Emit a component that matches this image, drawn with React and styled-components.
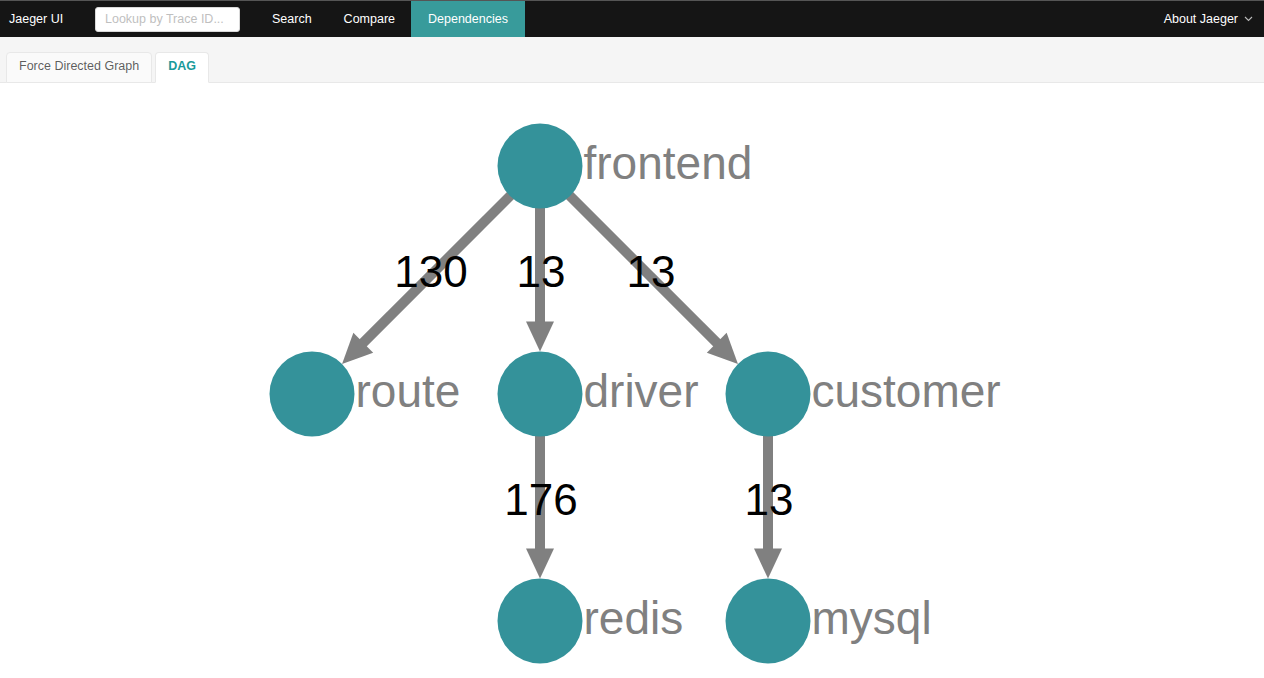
import React from 'react';
import styled, { createGlobalStyle } from 'styled-components';

const GlobalStyle = createGlobalStyle`
  html, body {
    margin: 0;
    padding: 0;
    background: #fff;
    font-family: "Liberation Sans", Arial, sans-serif;
  }
`;

const NODE_R = 42.5;
const ARROW_LEN = 30;
const ARROW_HALF = 14;

const nodes = {
  frontend: { x: 540, y: 83 },
  route: { x: 312, y: 311 },
  driver: { x: 540, y: 311 },
  customer: { x: 768, y: 311 },
  redis: { x: 540, y: 538 },
  mysql: { x: 768, y: 538 },
};

const edges = [
  { from: 'frontend', to: 'route', count: 130, dx: 5 },
  { from: 'frontend', to: 'driver', count: 13, dx: 1 },
  { from: 'frontend', to: 'customer', count: 13, dx: -3 },
  { from: 'driver', to: 'redis', count: 176, dx: 1 },
  { from: 'customer', to: 'mysql', count: 13, dx: 1 },
];

const edgeGeometry = (a, b) => {
  const dx = b.x - a.x;
  const dy = b.y - a.y;
  const len = Math.sqrt(dx * dx + dy * dy);
  const ux = dx / len;
  const uy = dy / len;
  const tip = { x: b.x - ux * NODE_R, y: b.y - uy * NODE_R };
  const base = { x: tip.x - ux * ARROW_LEN, y: tip.y - uy * ARROW_LEN };
  const left = { x: base.x - uy * ARROW_HALF, y: base.y + ux * ARROW_HALF };
  const right = { x: base.x + uy * ARROW_HALF, y: base.y - ux * ARROW_HALF };
  return {
    line: { x1: a.x, y1: a.y, x2: base.x + ux * 2, y2: base.y + uy * 2 },
    head: `${tip.x},${tip.y} ${left.x},${left.y} ${right.x},${right.y}`,
    mid: { x: (a.x + b.x) / 2, y: (a.y + b.y) / 2 },
  };
};

const App = () => (
  <Page>
    <GlobalStyle />
    <TopNav>
      <Brand>Jaeger UI</Brand>
      <TraceLookup placeholder="Lookup by Trace ID..." />
      <NavItem>Search</NavItem>
      <NavItem>Compare</NavItem>
      <NavItem $active>Dependencies</NavItem>
      <AboutMenu>
        About Jaeger
        <svg width="9" height="6" viewBox="0 0 9 6">
          <path d="M1 1 L4.5 4.5 L8 1" fill="none" stroke="#bbb" strokeWidth="1.1" />
        </svg>
      </AboutMenu>
    </TopNav>
    <TabBar>
      <Tab>Force Directed Graph</Tab>
      <Tab $active>DAG</Tab>
    </TabBar>
    <GraphCanvas viewBox="0 0 1264 595">
      {edges.map(e => {
        const g = edgeGeometry(nodes[e.from], nodes[e.to]);
        return (
          <g key={`${e.from}-${e.to}`}>
            <EdgeLine {...g.line} />
            <EdgeHead points={g.head} />
          </g>
        );
      })}
      {Object.entries(nodes).map(([name, n]) => (
        <g key={name}>
          <NodeCircle cx={n.x} cy={n.y} r={NODE_R} />
          <NodeLabel x={n.x + NODE_R + 1} y={n.y + 13}>{name}</NodeLabel>
        </g>
      ))}
      {edges.map(e => {
        const g = edgeGeometry(nodes[e.from], nodes[e.to]);
        return (
          <EdgeLabel key={`l-${e.from}-${e.to}`} x={g.mid.x + e.dx} y={g.mid.y + 7}>
            {e.count}
          </EdgeLabel>
        );
      })}
    </GraphCanvas>
  </Page>
);

const Page = styled.div`
  width: 100%;
  min-height: 100vh;
  display: flex;
  flex-direction: column;
`;

const TopNav = styled.div`
  display: flex;
  align-items: stretch;
  height: 36px;
  background: #151515;
  border-top: 1px solid #555;
  font-size: 12.5px;
  color: #fff;
`;

const Brand = styled.div`
  width: 95px;
  box-sizing: border-box;
  padding-left: 9px;
  display: flex;
  align-items: center;
`;

const TraceLookup = styled.input`
  align-self: center;
  width: 145px;
  height: 25px;
  box-sizing: border-box;
  margin: 0 16px 0 0;
  padding: 0 9px;
  border: 1px solid #d9d9d9;
  border-radius: 3px;
  background: #fff;
  font-family: inherit;
  font-size: 12.5px;
  outline: none;
  &::placeholder {
    color: #bfbfbf;
  }
`;

const NavItem = styled.div`
  display: flex;
  align-items: center;
  padding: 0 16px;
  background: ${p => (p.$active ? '#389b9b' : 'transparent')};
  color: #fff;
  cursor: pointer;
  ${p => p.$active && 'padding: 0 17px;'}
`;

const AboutMenu = styled.div`
  margin-left: auto;
  display: flex;
  align-items: center;
  gap: 6px;
  padding-right: 11px;
  cursor: pointer;
`;

const TabBar = styled.div`
  display: flex;
  align-items: flex-end;
  gap: 3px;
  height: 45px;
  padding-left: 6px;
  background: #f5f5f5;
  border-bottom: 1px solid #e8e8e8;
`;

const Tab = styled.div`
  height: 31px;
  box-sizing: border-box;
  display: flex;
  align-items: center;
  padding: 0 12px 3px;
  margin-bottom: -1px;
  border: 1px solid #e8e8e8;
  border-bottom-color: ${p => (p.$active ? '#fff' : '#e8e8e8')};
  border-radius: 4px 4px 0 0;
  background: ${p => (p.$active ? '#fff' : '#fafafa')};
  color: ${p => (p.$active ? '#199a9a' : 'rgba(0,0,0,0.65)')};
  font-size: 12.5px;
  font-weight: ${p => (p.$active ? 600 : 400)};
  cursor: pointer;
`;

const GraphCanvas = styled.svg`
  display: block;
  width: 1264px;
  height: 595px;
`;

const EdgeLine = styled.line`
  stroke: #808080;
  stroke-width: 10;
`;

const EdgeHead = styled.polygon`
  fill: #808080;
`;

const NodeCircle = styled.circle`
  fill: #34929a;
`;

const NodeLabel = styled.text`
  font-family: "Liberation Sans", Arial, sans-serif;
  font-size: 46px;
  fill: #808080;
`;

const EdgeLabel = styled.text`
  font-family: "Liberation Sans", Arial, sans-serif;
  font-size: 44px;
  fill: #000;
  text-anchor: middle;
`;

export default App;
